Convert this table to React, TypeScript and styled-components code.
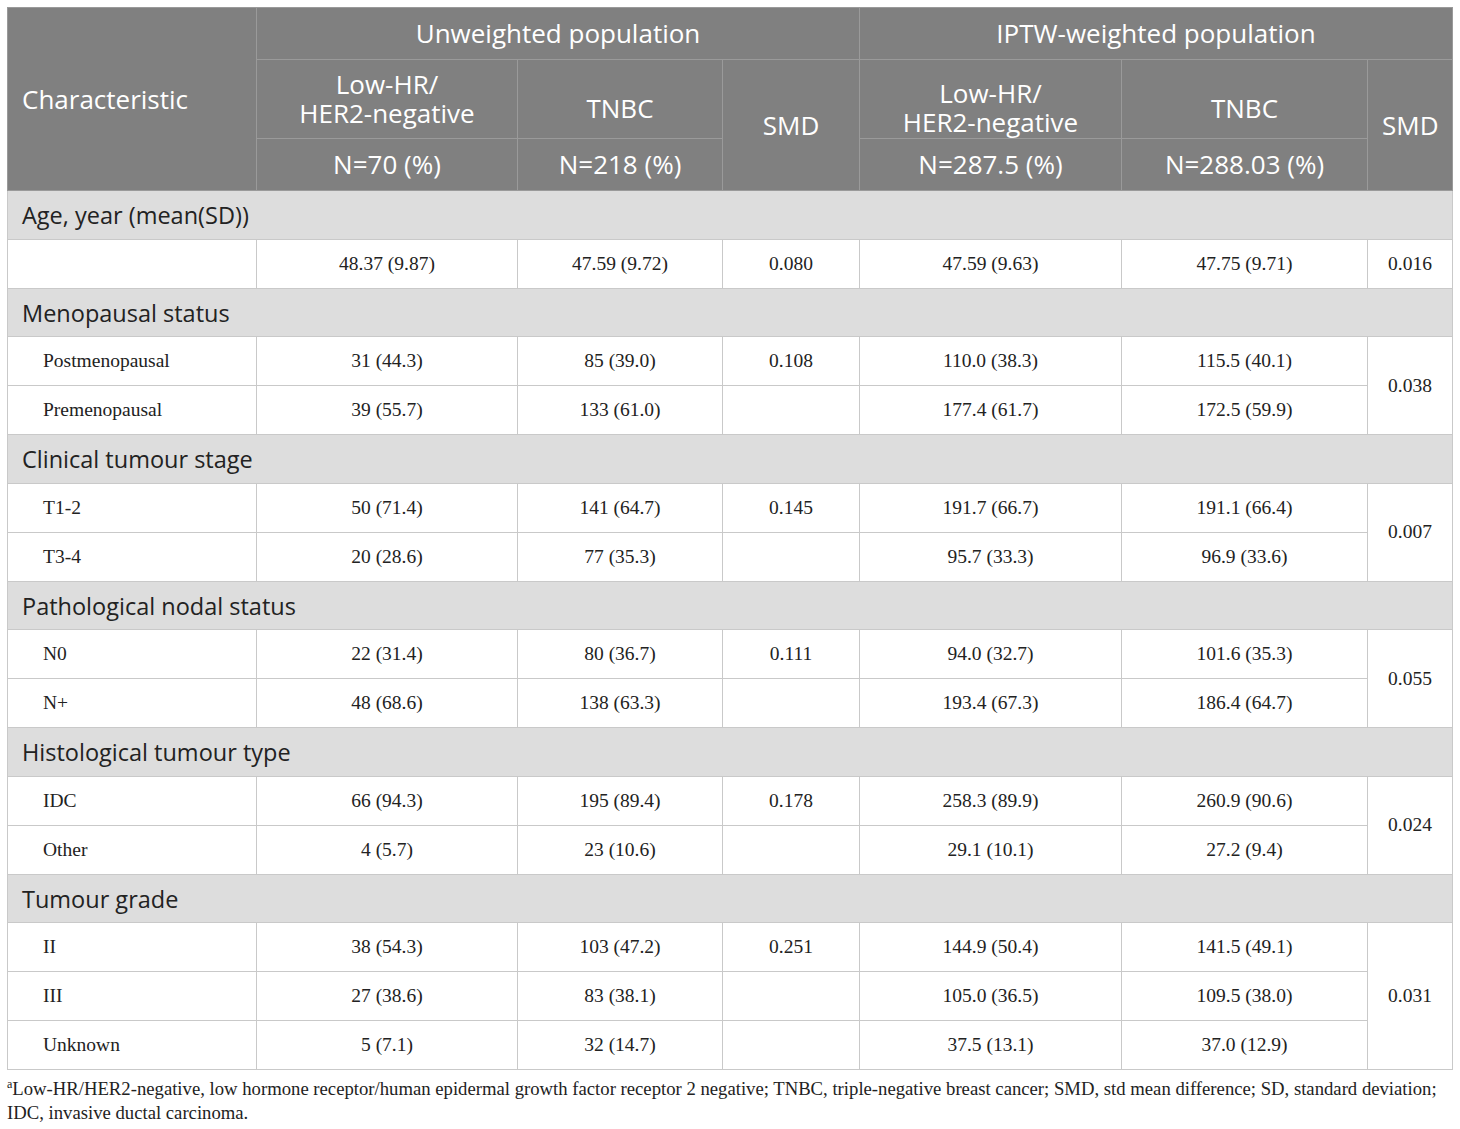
import React from "react";
import styled, { createGlobalStyle } from "styled-components";

const GlobalStyle = createGlobalStyle`
  body {
    margin: 0;
    background: #ffffff;
  }
`;

const Page = styled.div`
  padding: 7px 8px 0 7px;
  width: 1445px;
`;

const Table = styled.table`
  width: 1445px;
  border-collapse: collapse;
  table-layout: fixed;
  border: 1px solid #c9c9c9;
`;

const HeadCell = styled.th<{ $left?: boolean; $h?: number; $drop?: number }>`
  background: #808080;
  color: #ffffff;
  font-family: "Open Sans", "Noto Sans", sans-serif;
  font-weight: 400;
  font-size: 26px;
  line-height: 29px;
  height: ${(p) => (p.$h ? `${p.$h}px` : "auto")};
  padding: ${(p) => p.$drop ?? 0}px 14px 0 14px;
  text-align: ${(p) => (p.$left ? "left" : "center")};
  border: 1px solid #9a9a9a;
  vertical-align: middle;
`;

const SectionCell = styled.td`
  background: #dddddd;
  color: #222222;
  font-family: "Open Sans", "Noto Sans", sans-serif;
  font-size: 23.5px;
  height: 47.83px;
  padding: 0 14px;
  border: 1px solid #c9c9c9;
  vertical-align: middle;
`;

const LabelCell = styled.td`
  font-family: "Liberation Serif", "Times New Roman", serif;
  font-size: 19.5px;
  color: #222222;
  height: 47.83px;
  padding: 0 0 0 35px;
  border: 1px solid #c9c9c9;
  vertical-align: middle;
`;

const DataCell = styled.td`
  font-family: "Liberation Serif", "Times New Roman", serif;
  font-size: 19.5px;
  color: #222222;
  text-align: center;
  border: 1px solid #c9c9c9;
  vertical-align: middle;
`;

const Footnote = styled.p`
  margin: 8px 0 0 0;
  font-family: "Liberation Serif", "Times New Roman", serif;
  font-size: 18.7px;
  line-height: 22.5px;
  color: #222222;
  width: 1445px;
`;

const Sup = styled.span`
  font-size: 12px;
  position: relative;
  top: -7px;
`;

type Row = {
  label: string;
  cells: [string, string, string, string, string];
};

type Group = {
  title: string;
  rows: Row[];
  weightedSmd: string;
};

const groups: Group[] = [
  {
    title: "Age, year (mean(SD))",
    rows: [{ label: "", cells: ["48.37 (9.87)", "47.59 (9.72)", "0.080", "47.59 (9.63)", "47.75 (9.71)"] }],
    weightedSmd: "0.016",
  },
  {
    title: "Menopausal status",
    rows: [
      { label: "Postmenopausal", cells: ["31 (44.3)", "85 (39.0)", "0.108", "110.0 (38.3)", "115.5 (40.1)"] },
      { label: "Premenopausal", cells: ["39 (55.7)", "133 (61.0)", "", "177.4 (61.7)", "172.5 (59.9)"] },
    ],
    weightedSmd: "0.038",
  },
  {
    title: "Clinical tumour stage",
    rows: [
      { label: "T1-2", cells: ["50 (71.4)", "141 (64.7)", "0.145", "191.7 (66.7)", "191.1 (66.4)"] },
      { label: "T3-4", cells: ["20 (28.6)", "77 (35.3)", "", "95.7 (33.3)", "96.9 (33.6)"] },
    ],
    weightedSmd: "0.007",
  },
  {
    title: "Pathological nodal status",
    rows: [
      { label: "N0", cells: ["22 (31.4)", "80 (36.7)", "0.111", "94.0 (32.7)", "101.6 (35.3)"] },
      { label: "N+", cells: ["48 (68.6)", "138 (63.3)", "", "193.4 (67.3)", "186.4 (64.7)"] },
    ],
    weightedSmd: "0.055",
  },
  {
    title: "Histological tumour type",
    rows: [
      { label: "IDC", cells: ["66 (94.3)", "195 (89.4)", "0.178", "258.3 (89.9)", "260.9 (90.6)"] },
      { label: "Other", cells: ["4 (5.7)", "23 (10.6)", "", "29.1 (10.1)", "27.2 (9.4)"] },
    ],
    weightedSmd: "0.024",
  },
  {
    title: "Tumour grade",
    rows: [
      { label: "II", cells: ["38 (54.3)", "103 (47.2)", "0.251", "144.9 (50.4)", "141.5 (49.1)"] },
      { label: "III", cells: ["27 (38.6)", "83 (38.1)", "", "105.0 (36.5)", "109.5 (38.0)"] },
      { label: "Unknown", cells: ["5 (7.1)", "32 (14.7)", "", "37.5 (13.1)", "37.0 (12.9)"] },
    ],
    weightedSmd: "0.031",
  },
];

const widths = [249, 261, 205, 137, 262, 246, 85];

const App = () => {
  return (
    <>
      <GlobalStyle />
      <Page>
        <Table>
          <colgroup>
            {widths.map((w, i) => (
              <col key={i} style={{ width: w }} />
            ))}
          </colgroup>
          <thead>
            <tr>
              <HeadCell $left rowSpan={3}>
                Characteristic
              </HeadCell>
              <HeadCell colSpan={3} $h={51}>
                Unweighted population
              </HeadCell>
              <HeadCell colSpan={3}>IPTW-weighted population</HeadCell>
            </tr>
            <tr>
              <HeadCell $h={78}>
                Low-HR/
                <br />
                HER2-negative
              </HeadCell>
              <HeadCell $drop={18}>TNBC</HeadCell>
              <HeadCell rowSpan={2}>SMD</HeadCell>
              <HeadCell $drop={18}>
                Low-HR/
                <br />
                HER2-negative
              </HeadCell>
              <HeadCell $drop={18}>TNBC</HeadCell>
              <HeadCell rowSpan={2}>SMD</HeadCell>
            </tr>
            <tr>
              <HeadCell $h={51}>N=70 (%)</HeadCell>
              <HeadCell>N=218 (%)</HeadCell>
              <HeadCell>N=287.5 (%)</HeadCell>
              <HeadCell>N=288.03 (%)</HeadCell>
            </tr>
          </thead>
          <tbody>
            {groups.map((g) => (
              <React.Fragment key={g.title}>
                <tr>
                  <SectionCell colSpan={7}>{g.title}</SectionCell>
                </tr>
                {g.rows.map((r, i) => (
                  <tr key={i}>
                    <LabelCell>{r.label}</LabelCell>
                    {r.cells.map((c, j) => (
                      <DataCell key={j}>{c}</DataCell>
                    ))}
                    {i === 0 && <DataCell rowSpan={g.rows.length}>{g.weightedSmd}</DataCell>}
                  </tr>
                ))}
              </React.Fragment>
            ))}
          </tbody>
        </Table>
        <Footnote>
          <Sup>a</Sup>Low-HR/HER2-negative, low hormone receptor/human epidermal growth factor receptor 2 negative; TNBC,
          triple-negative breast cancer; SMD, std mean difference; SD, standard deviation; IDC, invasive ductal
          carcinoma.
        </Footnote>
      </Page>
    </>
  );
};

export default App;
